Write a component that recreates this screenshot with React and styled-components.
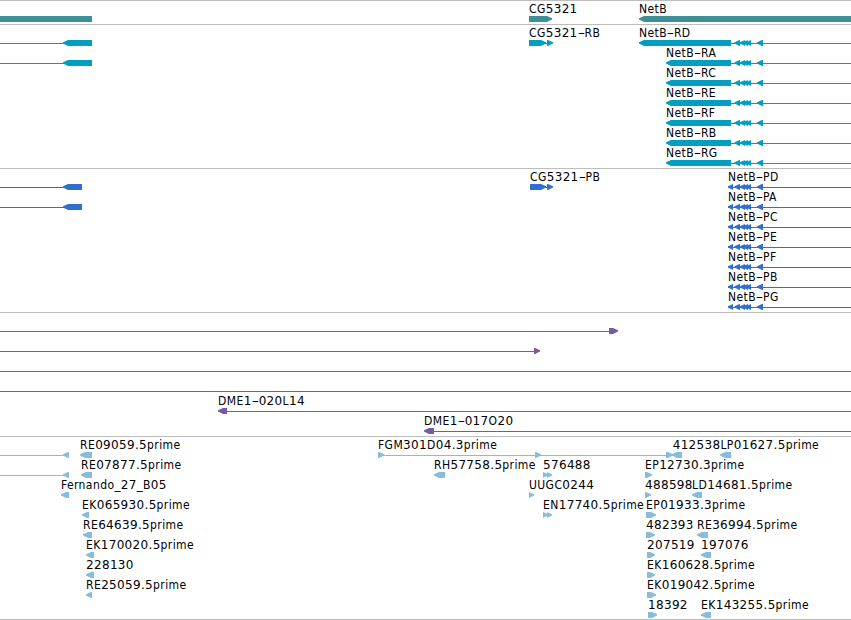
import React from "react";
import styled, { createGlobalStyle } from "styled-components";

const GlobalStyle = createGlobalStyle`
  body {
    margin: 0;
    background: #fff;
  }
`;
const Browser = styled.div`
  width: 851px;
  height: 620px;
  box-sizing: border-box;
  overflow: hidden;
  background: #fff;
  border-bottom: 1px solid #bdbdbd;
`;
const TrackBox = styled.section`
  border-top: 1px solid #bdbdbd;
  padding-bottom: 3px;
  color: ${(p) => p.$color};
`;
const RowBox = styled.div`
  position: relative;
  height: 20px;
`;
const Glyphs = styled.svg`
  display: block;
  width: 851px;
  height: 20px;
  fill: currentColor;
`;
const Label = styled.span`
  position: absolute;
  top: 0;
  left: ${(p) => p.$x}px;
  font-family: "DejaVu Sans Condensed", "DejaVu Sans", sans-serif;
  font-stretch: condensed;
  font-size: 12px;
  line-height: 16px;
  letter-spacing: 0.4px;
  white-space: pre;
  color: #000;
`;
const Digits = styled.span`
  font-family: "DejaVu Sans", sans-serif;
  font-stretch: normal;
  letter-spacing: 0.33px;
`;
const Dash = styled.span`
  display: inline-block;
  width: 7px;
  letter-spacing: 0;
  text-align: center;
  transform: scaleX(1.9);
`;

// shapes: line [from, to], left / right arrow [from, to]
const line = (a, b) => ({ type: "line", a, b });
const left = (a, b) => ({ type: "left", a, b });
const right = (a, b) => ({ type: "right", a, b });

const utrExons = [
  line(731, 851),
  left(734.5, 740),
  left(740, 745),
  left(743, 748),
  left(746, 751),
  left(757, 763),
];
const cdsExons = [
  line(728, 851),
  left(728, 733),
  left(734.5, 740),
  left(740, 745),
  left(743, 748),
  left(746, 751),
  left(757, 763),
];
const netbRna = (name) => ({
  labels: [[name, 666]],
  shapes: [left(666, 731), ...utrExons],
});
const netbCds = (name) => ({ labels: [[name, 728]], shapes: cdsExons });

const tracks = [
  {
    color: "#3f8f96",
    rows: [
      {
        labels: [["CG5321", 529], ["NetB", 639]],
        shapes: [{ type: "bar", a: 0, b: 92 }, right(529, 552), left(639, 856)],
      },
    ],
  },
  {
    color: "#009fc1",
    rows: [
      {
        labels: [["CG5321-RB", 529], ["NetB-RD", 639]],
        shapes: [
          line(0, 66),
          left(63, 92),
          line(529, 551),
          right(529, 546),
          right(547, 553),
          left(639, 731),
          ...utrExons,
        ],
      },
      {
        labels: [["NetB-RA", 666]],
        shapes: [line(0, 66), left(63, 92), left(666, 731), ...utrExons],
      },
      netbRna("NetB-RC"),
      netbRna("NetB-RE"),
      netbRna("NetB-RF"),
      netbRna("NetB-RB"),
      netbRna("NetB-RG"),
    ],
  },
  {
    color: "#306fcf",
    rows: [
      {
        labels: [["CG5321-PB", 530], ["NetB-PD", 728]],
        shapes: [
          line(0, 66),
          left(63, 82),
          line(530, 551),
          right(530, 546),
          right(547, 553),
          ...cdsExons,
        ],
      },
      {
        labels: [["NetB-PA", 728]],
        shapes: [line(0, 66), left(63, 82), ...cdsExons],
      },
      netbCds("NetB-PC"),
      netbCds("NetB-PE"),
      netbCds("NetB-PF"),
      netbCds("NetB-PB"),
      netbCds("NetB-PG"),
    ],
  },
  {
    color: "#7759a8",
    rows: [
      { labels: [], shapes: [line(0, 612), right(609, 618)] },
      { labels: [], shapes: [line(0, 536), right(534, 540)] },
      { labels: [], shapes: [line(0, 851)] },
      { labels: [], shapes: [line(0, 851)] },
      {
        labels: [["DME1-020L14", 218]],
        shapes: [left(218, 227), line(227, 851)],
      },
      {
        labels: [["DME1-017O20", 424]],
        shapes: [left(424, 434), line(434, 851)],
      },
    ],
  },
  {
    color: "#88bcdd",
    rows: [
      {
        labels: [
          ["RE09059.5prime", 80],
          ["FGM301D04.3prime", 378],
          ["412538", 672.7],
          ["LP01627.5prime", 720.4],
        ],
        shapes: [
          line(0, 66),
          left(63, 69),
          left(80, 92),
          line(378, 676),
          right(378, 384),
          right(535, 541),
          right(666, 673),
          left(672, 682),
          left(720, 731),
        ],
      },
      {
        labels: [
          ["RE07877.5prime", 81],
          ["RH57758.5prime", 434],
          ["576488", 543],
          ["EP12730.3prime", 645],
        ],
        shapes: [
          line(0, 66),
          left(63, 69),
          left(81, 92),
          left(434, 445),
          right(543, 548),
          right(547, 552),
          right(645, 652),
        ],
      },
      {
        labels: [
          ["Fernando_27_B05", 61],
          ["UUGC0244", 529],
          ["488598", 645],
          ["LD14681.5prime", 692],
        ],
        shapes: [left(61, 69), right(529, 534), right(645, 651), left(692, 702)],
      },
      {
        labels: [
          ["EK065930.5prime", 82],
          ["EN17740.5prime", 543],
          ["EP01933.3prime", 646],
        ],
        shapes: [left(82, 89), right(543, 548), right(547, 552), right(646, 656)],
      },
      {
        labels: [
          ["RE64639.5prime", 83],
          ["482393", 646],
          ["RE36994.5prime", 697],
        ],
        shapes: [left(83, 92), right(646, 655), left(697, 708)],
      },
      {
        labels: [["EK170020.5prime", 86], ["207519", 647], ["197076", 701]],
        shapes: [left(86, 94), right(647, 655), left(701, 711)],
      },
      {
        labels: [["228130", 86], ["EK160628.5prime", 647]],
        shapes: [left(86, 94), right(647, 655)],
      },
      {
        labels: [["RE25059.5prime", 86], ["EK019042.5prime", 647]],
        shapes: [left(86, 92), right(647, 656)],
      },
      {
        labels: [["18392", 648], ["EK143255.5prime", 701]],
        shapes: [right(648, 657), left(701, 711)],
      },
    ],
  },
];

function Shape({ type, a, b }) {
  if (type === "line") return <rect x={a} y="18" width={b - a} height="1" />;
  if (type === "bar") return <rect x={a} y="15" width={b - a} height="6" />;
  const head = Math.min(5, b - a);
  if (type === "left") {
    return (
      <path
        d={`M${a} 17.2L${a + head} 15H${b}V21H${a + head}L${a} 18.6Z`}
      />
    );
  }
  return (
    <path d={`M${b} 17.2L${b - head} 15H${a}V21H${b - head}L${b} 18.6Z`} />
  );
}

function Name({ text, x }) {
  return (
    <Label $x={x}>
      {text.split(/([\d._]+|-)/).map((part, i) => {
        if (part === "-") return <Dash key={i}>-</Dash>;
        if (/^[\d._]+$/.test(part)) return <Digits key={i}>{part}</Digits>;
        return part;
      })}
    </Label>
  );
}

function Row({ labels, shapes }) {
  return (
    <RowBox>
      <Glyphs viewBox="0 0 851 20" overflow="visible">
        {shapes.map((s, i) => (
          <Shape key={i} {...s} />
        ))}
      </Glyphs>
      {labels.map(([text, x]) => (
        <Name key={text} text={text} x={x} />
      ))}
    </RowBox>
  );
}

function App() {
  return (
    <>
      <GlobalStyle />
      <Browser>
        {tracks.map((track) => (
          <TrackBox key={track.color} $color={track.color}>
            {track.rows.map((row, i) => (
              <Row key={i} {...row} />
            ))}
          </TrackBox>
        ))}
      </Browser>
    </>
  );
}

export default App;
